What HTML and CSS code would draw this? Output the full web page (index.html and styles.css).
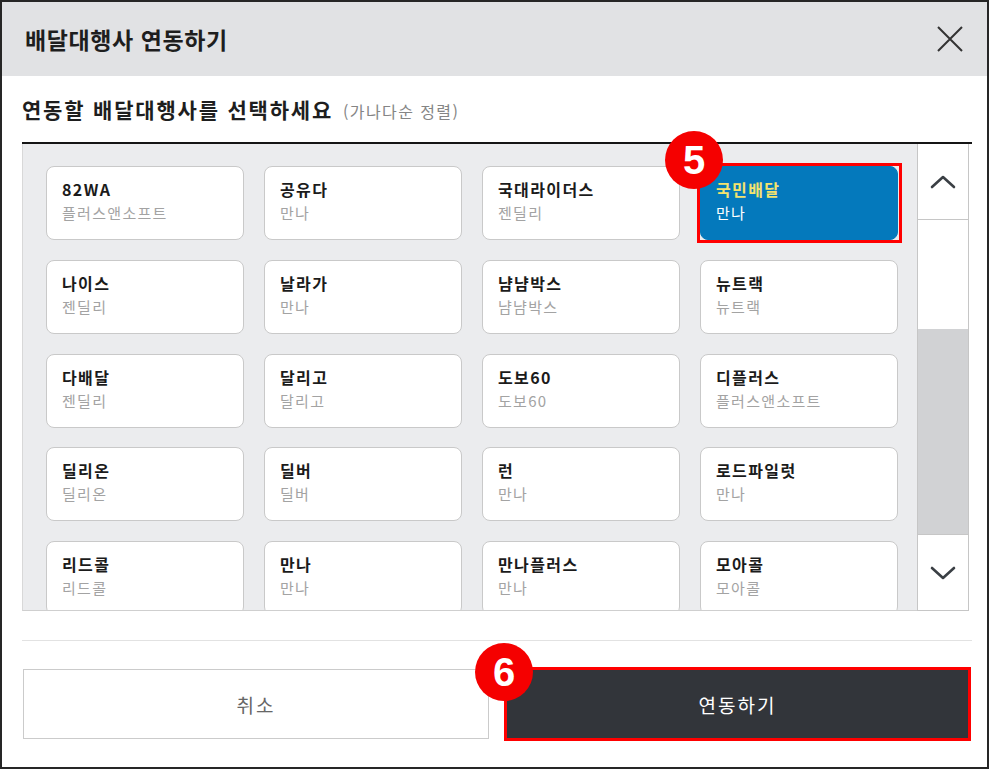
FILE: index.html
```html
<!DOCTYPE html>
<html lang="ko">
<head>
    <meta charset="UTF-8">
    <title>배달대행사 연동하기</title>
    <link rel="stylesheet" href="styles.css">
</head>
<body>
    <div class="modal">
        <header class="modal-head">
            <h1>배달대행사 연동하기</h1>
            <button class="close" type="button" aria-label="닫기">
                <svg width="26" height="26" viewBox="0 0 26 26"><path d="M1 1 L25 25 M25 1 L1 25" stroke="#333" stroke-width="2" fill="none"/></svg>
            </button>
        </header>

        <div class="modal-body">
            <h2 class="sub-title">연동할 배달대행사를 선택하세요 <span>(가나다순 정렬)</span></h2>

            <!-- 대행사 목록 -->
            <div class="list-box">
                <div class="agency-grid">
                    <div class="card"><b>82WA</b><span>플러스앤소프트</span></div>
                    <div class="card"><b>공유다</b><span>만나</span></div>
                    <div class="card"><b>국대라이더스</b><span>젠딜리</span></div>
                    <div class="card selected"><b>국민배달</b><span>만나</span></div>

                    <div class="card"><b>나이스</b><span>젠딜리</span></div>
                    <div class="card"><b>날라가</b><span>만나</span></div>
                    <div class="card"><b>냠냠박스</b><span>냠냠박스</span></div>
                    <div class="card"><b>뉴트랙</b><span>뉴트랙</span></div>

                    <div class="card"><b>다배달</b><span>젠딜리</span></div>
                    <div class="card"><b>달리고</b><span>달리고</span></div>
                    <div class="card"><b>도보60</b><span>도보60</span></div>
                    <div class="card"><b>디플러스</b><span>플러스앤소프트</span></div>

                    <div class="card"><b>딜리온</b><span>딜리온</span></div>
                    <div class="card"><b>딜버</b><span>딜버</span></div>
                    <div class="card"><b>런</b><span>만나</span></div>
                    <div class="card"><b>로드파일럿</b><span>만나</span></div>

                    <div class="card"><b>리드콜</b><span>리드콜</span></div>
                    <div class="card"><b>만나</b><span>만나</span></div>
                    <div class="card"><b>만나플러스</b><span>만나</span></div>
                    <div class="card"><b>모아콜</b><span>모아콜</span></div>
                </div>

                <div class="scrollbar">
                    <div class="sb-btn">
                        <svg width="26" height="16" viewBox="0 0 26 16"><path d="M2 13 L13 3 L24 13" stroke="#3a3f44" stroke-width="2.6" fill="none" stroke-linecap="round" stroke-linejoin="round"/></svg>
                    </div>
                    <div class="sb-thumb"></div>
                    <div class="sb-track"></div>
                    <div class="sb-btn">
                        <svg width="26" height="16" viewBox="0 0 26 16"><path d="M2 3 L13 13 L24 3" stroke="#3a3f44" stroke-width="2.6" fill="none" stroke-linecap="round" stroke-linejoin="round"/></svg>
                    </div>
                </div>

                <i class="step step-5">5</i>
            </div>

            <hr class="divider">

            <div class="actions">
                <button type="button" class="btn-cancel">취소</button>
                <button type="button" class="btn-ok">연동하기<i class="step step-6">6</i></button>
            </div>
        </div>
    </div>
</body>
</html>
```

FILE: styles.css
```css
body {
    margin: 0;
    background-color: #fff;
    font-family: "Noto Sans CJK KR", "Noto Sans", sans-serif;
}

.modal {
    width: 989px;
    height: 769px;
    box-sizing: border-box;
    border: 2px solid #262626;
    background-color: #fff;
}

.modal-head {
    height: 74px;
    background-color: #e1e2e4;
    display: flex;
    align-items: center;
    justify-content: space-between;
    padding: 0 24px 0 23px;
}

.modal-head h1 {
    margin: 0;
    font-size: 23px;
    font-weight: bold;
    color: #1e1e1e;
    letter-spacing: 0.6px;
}

.close {
    border: none;
    background: none;
    padding: 0;
    width: 26px;
    height: 26px;
    display: flex;
}

.modal-body {
    padding: 0 15px 0 20px;
}

.sub-title {
    margin: 0;
    height: 66px;
    display: flex;
    align-items: center;
    gap: 10px;
    font-size: 21px;
    font-weight: bold;
    color: #1e1e1e;
    letter-spacing: 1.8px;
}

.sub-title span {
    font-size: 16px;
    font-weight: normal;
    color: #858585;
    letter-spacing: 1.4px;
    padding-top: 3px;
}

.list-box {
    position: relative;
    display: flex;
    height: 467px;
    border-top: 2px solid #151515;
}

.agency-grid {
    width: 895px;
    box-sizing: border-box;
    background-color: #ebecee;
    border-left: 1px solid #d8d8d8;
    border-bottom: 1px solid #cfcfcf;
    padding: 22px 20px 0 23px;
    display: grid;
    grid-template-columns: repeat(4, 198px);
    grid-auto-rows: 74px;
    column-gap: 20px;
    row-gap: 19.75px;
    overflow: hidden;
}

.card {
    position: relative;
    box-sizing: border-box;
    background-color: #fff;
    border: 1px solid #c9c9c9;
    border-radius: 8px;
    padding: 11px 15px;
    display: flex;
    flex-direction: column;
}

.card b {
    font-size: 16px;
    line-height: 22px;
    color: #1b1b1b;
    letter-spacing: 1.4px;
}

.card span {
    font-size: 15px;
    line-height: 22px;
    margin-top: 2px;
    color: #a3a3a3;
    letter-spacing: 1.3px;
}

.card.selected {
    background-color: #0479bc;
    border-color: #0479bc;
}

/* 선택 강조 박스 */
.card.selected::after {
    content: "";
    position: absolute;
    left: -4px;
    top: -4px;
    right: -5px;
    bottom: -4px;
    border: 3px solid #f00;
}

.card.selected b {
    color: #f4e36e;
}

.card.selected span {
    color: #fff;
}

.step {
    position: absolute;
    width: 58px;
    height: 58px;
    border-radius: 50%;
    background-color: #f50000;
    color: #fff;
    font-family: "Liberation Sans", Arial, sans-serif;
    font-style: normal;
    font-weight: bold;
    font-size: 40px;
    line-height: 58px;
    text-align: center;
    letter-spacing: 0;
}

.step-5 {
    left: 643px;
    top: -13px;
}

.scrollbar {
    width: 52px;
    box-sizing: border-box;
    border: 1px solid #c6c6c6;
    border-top: none;
    display: flex;
    flex-direction: column;
}

.sb-btn {
    height: 75px;
    background-color: #fff;
    display: flex;
    align-items: center;
    justify-content: center;
}

.sb-btn:first-child {
    border-bottom: 1px solid #c6c6c6;
}

.sb-btn:last-child {
    border-top: 1px solid #c6c6c6;
}

.sb-thumb {
    height: 109px;
    background-color: #fff;
}

.sb-track {
    flex: 1;
    background-color: #d1d2d4;
}

.divider {
    margin: 29px 0 0 0;
    border: none;
    border-top: 1px solid #e2e2e2;
}

.actions {
    display: flex;
    align-items: center;
    gap: 15px;
    margin: 26px 0 0 1px;
}

.actions button {
    font-family: "Noto Sans CJK KR", "Noto Sans", sans-serif;
    font-size: 19px;
    letter-spacing: 2px;
    cursor: pointer;
}

.btn-cancel {
    width: 466px;
    height: 70px;
    background-color: #fff;
    border: 1px solid #cbcbcb;
    color: #666;
}

.btn-ok {
    position: relative;
    width: 467px;
    height: 74px;
    background-color: #32353a;
    border: 3px solid #f00;
    color: #fff;
}

.step-6 {
    left: -32px;
    top: -27px;
}
```
